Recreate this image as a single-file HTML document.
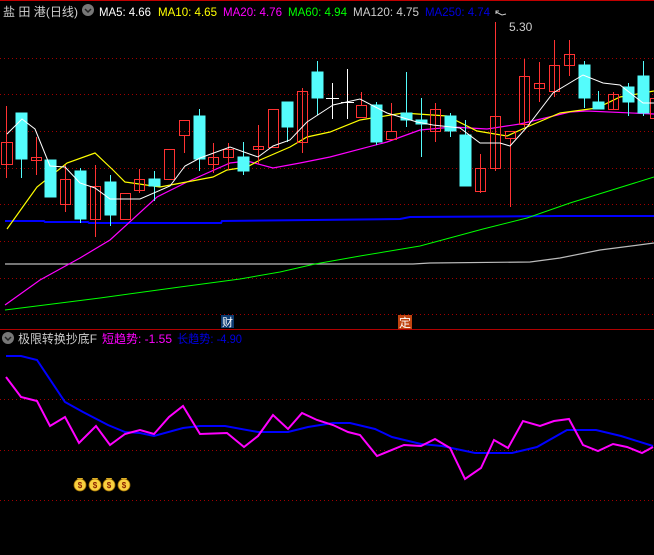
<!DOCTYPE html>
<html><head><meta charset="utf-8"><style>
html,body{margin:0;padding:0;background:#000;width:654px;height:555px;overflow:hidden}
svg{display:block}
text{font-family:"Liberation Sans","Noto Sans CJK SC",sans-serif}
</style></head><body>
<svg width="654" height="555" viewBox="0 0 654 555" xmlns="http://www.w3.org/2000/svg">
<rect width="654" height="555" fill="#000"/>
<line x1="0" y1="0.5" x2="654" y2="0.5" stroke="#c00000"/>
<g stroke="#a00000" stroke-dasharray="1,3" stroke-width="1">
<line x1="0" y1="58.5" x2="654" y2="58.5"/><line x1="0" y1="94.5" x2="654" y2="94.5"/>
<line x1="0" y1="131.5" x2="654" y2="131.5"/><line x1="0" y1="168.5" x2="654" y2="168.5"/>
<line x1="0" y1="204.5" x2="654" y2="204.5"/><line x1="0" y1="241.5" x2="654" y2="241.5"/>
<line x1="0" y1="278.5" x2="654" y2="278.5"/><line x1="0" y1="314.5" x2="654" y2="314.5"/>
<line x1="0" y1="399.5" x2="654" y2="399.5"/><line x1="0" y1="450.5" x2="654" y2="450.5"/>
<line x1="0" y1="500.5" x2="654" y2="500.5"/>
</g>
<line x1="0" y1="329.5" x2="654" y2="329.5" stroke="#b00000"/>
<!-- header -->
<text x="3" y="16" font-size="12" fill="#d0d0d0" textLength="75" lengthAdjust="spacingAndGlyphs">盐 田 港(日线)</text>
<circle cx="88" cy="10" r="6" fill="#777"/><path d="M85 9l3 3 3-3" stroke="#222" stroke-width="1.5" fill="none"/>
<text x="99" y="16" font-size="12" fill="#fff" textLength="52" lengthAdjust="spacingAndGlyphs">MA5: 4.66</text>
<text x="158" y="16" font-size="12" fill="#ff0" textLength="59" lengthAdjust="spacingAndGlyphs">MA10: 4.65</text>
<text x="223" y="16" font-size="12" fill="#f0f" textLength="59" lengthAdjust="spacingAndGlyphs">MA20: 4.76</text>
<text x="288" y="16" font-size="12" fill="#0f0" textLength="59" lengthAdjust="spacingAndGlyphs">MA60: 4.94</text>
<text x="353" y="16" font-size="12" fill="#ccc" textLength="66" lengthAdjust="spacingAndGlyphs">MA120: 4.75</text>
<text x="425" y="16" font-size="12" fill="#0000e0" textLength="65" lengthAdjust="spacingAndGlyphs">MA250: 4.74</text>
<!-- MA lines -->
<polyline fill="none" stroke="#0000ff" stroke-width="2" points="5,221 44,221 45,222 88,222 89,223 221,223 222,221 400,219 410,217 560,216 654,216"/>
<polyline fill="none" stroke="#bbb" stroke-width="1.2" points="5,264 413,264 430,263 530,262 560,258 600,250 654,243"/>
<polyline fill="none" stroke="#00ff00" stroke-width="1" points="5,310 100,298 180,287 240,279 280,272 315,264 360,256 420,246 483,229 527,218 570,203 654,177"/>
<polyline fill="none" stroke="#ff00ff" stroke-width="1.2" points="5,305 40,280 80,258 110,240 157,197 187,182 230,163 247,161 273,168 300,163 330,157 387,142 420,130 453,127 487,129 520,124 570,112 587,111 654,114"/>
<polyline fill="none" stroke="#ffff00" stroke-width="1.2" points="7,229 37,187 67,163 95,153 113,170 125,182 160,187 213,177 227,170 247,167 260,160 290,147 307,137 330,132 360,120 403,113 447,116 477,131 507,136 527,127 560,113 597,108 620,97 654,91"/>
<!-- candles -->
<g stroke-width="1">
<g stroke="#ff3232" fill="none">
<line x1="6.5" y1="106" x2="6.5" y2="178"/><rect x="1.5" y="142.5" width="11" height="22"/>
<line x1="36.5" y1="137" x2="36.5" y2="175"/><rect x="31.5" y="157.5" width="10" height="3"/>
<line x1="65.5" y1="165" x2="65.5" y2="212"/><rect x="60.5" y="179.5" width="10" height="25"/>
<line x1="95.5" y1="165" x2="95.5" y2="237"/><rect x="90.5" y="186.5" width="10" height="33"/>
<rect x="120.5" y="193.5" width="10" height="26"/>
<line x1="139.5" y1="169" x2="139.5" y2="193"/><rect x="134.5" y="179.5" width="10" height="11"/>
<rect x="164.5" y="149.5" width="10" height="30"/>
<line x1="184.5" y1="135" x2="184.5" y2="153"/><rect x="179.5" y="120.5" width="10" height="15"/>
<line x1="213.5" y1="143" x2="213.5" y2="173"/><rect x="208.5" y="157.5" width="10" height="7"/>
<line x1="228.5" y1="143" x2="228.5" y2="170"/><rect x="223.5" y="149.5" width="10" height="8"/>
<line x1="258.5" y1="125" x2="258.5" y2="164"/><rect x="253.5" y="146.5" width="10" height="3"/>
<rect x="268.5" y="109.5" width="10" height="38"/>
<line x1="302.5" y1="88" x2="302.5" y2="153"/><rect x="297.5" y="91.5" width="10" height="51"/>
<line x1="361.5" y1="92" x2="361.5" y2="105"/><rect x="356.5" y="105.5" width="10" height="12"/>
<line x1="391.5" y1="103" x2="391.5" y2="131"/><rect x="386.5" y="131.5" width="10" height="8"/>
<line x1="435.5" y1="103" x2="435.5" y2="142"/><rect x="430.5" y="109.5" width="10" height="22"/>
<line x1="480.5" y1="154" x2="480.5" y2="193"/><rect x="475.5" y="168.5" width="10" height="23"/>
<line x1="495.5" y1="22" x2="495.5" y2="171"/><rect x="490.5" y="116.5" width="10" height="52"/>
<line x1="510.5" y1="138" x2="510.5" y2="207"/><rect x="505.5" y="131.5" width="10" height="7"/>
<line x1="524.5" y1="59" x2="524.5" y2="127"/><rect x="519.5" y="76.5" width="10" height="48"/>
<line x1="539.5" y1="62" x2="539.5" y2="102"/><rect x="534.5" y="83.5" width="10" height="5"/>
<line x1="554.5" y1="40" x2="554.5" y2="97"/><rect x="549.5" y="65.5" width="10" height="26"/>
<line x1="569.5" y1="40" x2="569.5" y2="76"/><rect x="564.5" y="54.5" width="10" height="11"/>
<line x1="613.5" y1="92" x2="613.5" y2="109"/><rect x="608.5" y="94.5" width="10" height="15"/>
<rect x="650.5" y="98.5" width="10" height="20"/>
</g>
<g stroke="#54fcfc" fill="#54fcfc">
<line x1="21.5" y1="113" x2="21.5" y2="178"/><rect x="16" y="113" width="11" height="46"/>
<rect x="45" y="160" width="11" height="37"/>
<line x1="80.5" y1="168" x2="80.5" y2="223"/><rect x="75" y="171" width="11" height="48"/>
<line x1="110.5" y1="175" x2="110.5" y2="226"/><rect x="105" y="182" width="11" height="33"/>
<line x1="154.5" y1="171" x2="154.5" y2="201"/><rect x="149" y="179" width="11" height="7"/>
<line x1="199.5" y1="109" x2="199.5" y2="171"/><rect x="194" y="116" width="11" height="43"/>
<line x1="243.5" y1="142" x2="243.5" y2="175"/><rect x="238" y="157" width="11" height="14"/>
<line x1="287.5" y1="102" x2="287.5" y2="142"/><rect x="282" y="102" width="11" height="25"/>
<line x1="317.5" y1="61" x2="317.5" y2="115"/><rect x="312" y="72" width="11" height="26"/>
<line x1="376.5" y1="102" x2="376.5" y2="145"/><rect x="371" y="105" width="11" height="37"/>
<line x1="406.5" y1="72" x2="406.5" y2="127"/><rect x="401" y="113" width="11" height="7"/>
<line x1="421.5" y1="98" x2="421.5" y2="157"/><rect x="416" y="120" width="11" height="4"/>
<line x1="450.5" y1="113" x2="450.5" y2="137"/><rect x="445" y="116" width="11" height="15"/>
<line x1="465.5" y1="120" x2="465.5" y2="186"/><rect x="460" y="135" width="11" height="51"/>
<line x1="584.5" y1="61" x2="584.5" y2="108"/><rect x="579" y="65" width="11" height="33"/>
<line x1="598.5" y1="91" x2="598.5" y2="109"/><rect x="593" y="102" width="11" height="7"/>
<line x1="628.5" y1="83" x2="628.5" y2="116"/><rect x="623" y="87" width="11" height="15"/>
<line x1="643.5" y1="61" x2="643.5" y2="116"/><rect x="638" y="76" width="11" height="37"/>
</g>
<g stroke="#fff">
<line x1="332.5" y1="83" x2="332.5" y2="119"/><line x1="326" y1="98.5" x2="339" y2="98.5"/>
<line x1="347.5" y1="69" x2="347.5" y2="119"/><line x1="341" y1="102.5" x2="354" y2="102.5"/>
</g>
</g>
<polyline fill="none" stroke="#fff" stroke-width="1" points="7,134 22,119 35,129 50,166 65,167 80,183 95,188 110,199 140,199 170,186 185,166 200,158 230,147 258,157 273,146 290,140 307,122 330,107 333,105 360,99 387,113 417,122 433,125 460,128 480,143 500,143 510,146 527,127 553,93 583,75 603,83 620,85 643,103 654,103"/>
<path d="M496 14l0 -3 3 0 M496 12l6 3 4 -1" stroke="#ccc" fill="none"/>
<text x="509" y="31" font-size="12" fill="#ccc">5.30</text>
<!-- labels -->
<rect x="221" y="315" width="13" height="13" fill="#0c3a70"/>
<text x="222" y="326" font-size="11" fill="#fff">财</text>
<rect x="398" y="315" width="14" height="14" fill="#c04410"/>
<text x="399" y="327" font-size="12" fill="#fff">定</text>
<!-- lower header -->
<circle cx="8" cy="338" r="6" fill="#777"/><path d="M5 337l3 3 3-3" stroke="#222" stroke-width="1.5" fill="none"/>
<text x="18" y="343" font-size="12" fill="#ccc" textLength="79" lengthAdjust="spacingAndGlyphs">极限转换抄底F</text>
<text x="102" y="343" font-size="12" fill="#ff00ff" textLength="70" lengthAdjust="spacingAndGlyphs">短趋势: -1.55</text>
<text x="177" y="343" font-size="12" fill="#0000e0" textLength="65" lengthAdjust="spacingAndGlyphs">长趋势: -4.90</text>
<!-- lower lines -->
<polyline fill="none" stroke="#0000ff" stroke-width="2" points="6,356 21,356 37,360 65,402 83,412 108,425 125,432 140,433 154,436 183,428 200,426 225,426 258,432 288,432 308,427 333,423 350,423 375,429 392,437 421,444 442,446 475,453 512,453 537,447 567,430 596,430 621,436 653,446"/>
<polyline fill="none" stroke="#ff00ff" stroke-width="2" points="6,377 21,397 37,401 50,426 65,417 79,443 96,426 110,445 125,434 140,430 154,434 169,417 183,406 200,434 227,433 244,447 258,436 273,415 288,429 302,413 317,420 333,425 348,432 360,435 377,456 404,445 421,446 435,439 450,448 465,479 481,468 494,440 508,448 523,421 540,426 554,421 569,419 583,445 598,451 613,444 627,447 642,453 653,447"/>
<!-- money bags -->
<g font-size="8" font-weight="bold" text-anchor="middle">
<g><path d="M77 478h6l-1 2h-4z" fill="#f0c030"/><circle cx="80" cy="485" r="6" fill="#f8d040" stroke="#a07000" stroke-width="0.8"/><text x="80" y="488" fill="#8a2000">$</text></g>
<g><path d="M92 478h6l-1 2h-4z" fill="#f0c030"/><circle cx="95" cy="485" r="6" fill="#f8d040" stroke="#a07000" stroke-width="0.8"/><text x="95" y="488" fill="#8a2000">$</text></g>
<g><path d="M106 478h6l-1 2h-4z" fill="#f0c030"/><circle cx="109" cy="485" r="6" fill="#f8d040" stroke="#a07000" stroke-width="0.8"/><text x="109" y="488" fill="#8a2000">$</text></g>
<g><path d="M121 478h6l-1 2h-4z" fill="#f0c030"/><circle cx="124" cy="485" r="6" fill="#f8d040" stroke="#a07000" stroke-width="0.8"/><text x="124" y="488" fill="#8a2000">$</text></g>
</g>
</svg>
</body></html>
